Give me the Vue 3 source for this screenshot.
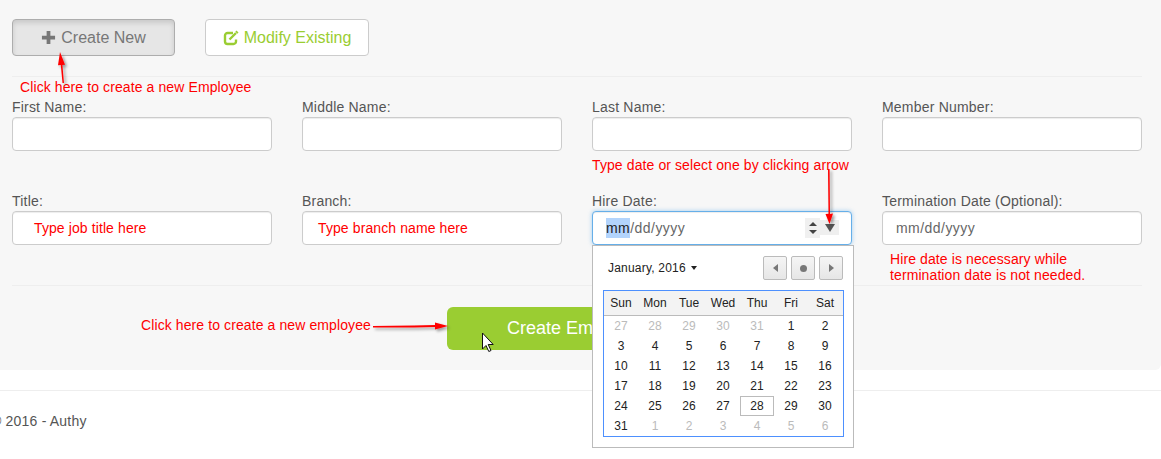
<script setup>
const fields = [
    { label: "First Name:" },
    { label: "Middle Name:" },
    { label: "Last Name:" },
    { label: "Member Number:" },
    { label: "Title:", note: "Type job title here", indent: "wide" },
    { label: "Branch:", note: "Type branch name here" },
    { label: "Hire Date:", date: true, active: true },
    { label: "Termination Date (Optional):", date: true },
];

const weekdays = ["Sun", "Mon", "Tue", "Wed", "Thu", "Fri", "Sat"];

const weeks = [
    [27, 28, 29, 30, 31, 1, 2],
    [3, 4, 5, 6, 7, 8, 9],
    [10, 11, 12, 13, 14, 15, 16],
    [17, 18, 19, 20, 21, 22, 23],
    [24, 25, 26, 27, 28, 29, 30],
    [31, 1, 2, 3, 4, 5, 6],
];

function isMuted(rowIndex, day) {
    return (rowIndex === 0 && day > 20) || (rowIndex === 5 && day < 20);
}
</script>

<template>
    <div class="page">
        <section class="panel">
            <div class="tabs">
                <button class="tab tab-active">
                    <svg class="tab-icon" viewBox="0 0 16 16" width="15" height="15">
                        <path d="M6 1h4v5h5v4h-5v5H6v-5H1V6h5z" fill="#777" />
                    </svg>
                    Create New
                </button>
                <button class="tab tab-modify">
                    <svg class="tab-icon" viewBox="0 0 16 16" width="16" height="16">
                        <path d="M13 9.500v2a2.500 2.500 0 0 1-2.500 2.500h-6A2.500 2.500 0 0 1 2 11.500v-6A2.500 2.500 0 0 1 4.500 3H10" fill="none" stroke="#9acd32" stroke-width="2.400" />
                        <path d="M6.500 9.500L13 3" fill="none" stroke="#9acd32" stroke-width="2.400" />
                        <path d="M13.500 .5l2 2-1.200 1.200-2-2z" fill="#9acd32" />
                    </svg>
                    Modify Existing
                </button>
            </div>

            <hr class="rule" />

            <div class="fields">
                <div v-for="f in fields" :key="f.label" class="field">
                    <label>{{ f.label }}</label>
                    <div class="input" :class="{ focused: f.active }">
                        <span v-if="f.note" class="note" :class="{ wide: f.indent }">{{ f.note }}</span>
                        <span v-if="f.date" class="date-text"><span :class="{ sel: f.active }">mm</span>/dd/yyyy</span>
                        <template v-if="f.active">
                            <span class="spin">
                                <i class="up"></i>
                                <i class="down"></i>
                            </span>
                            <span class="drop"><i></i></span>
                        </template>
                    </div>
                </div>
            </div>

            <hr class="rule rule-low" />

            <div class="submit-row">
                <button class="submit">Create Employee</button>
            </div>
        </section>

        <footer class="footer">
            <p>© 2016 - Authy</p>
        </footer>

        <!-- date picker popup -->
        <div class="picker">
            <div class="picker-head">
                <span class="month">January, 2016 <i class="caret"></i></span>
                <div class="picker-nav">
                    <button><i class="tri-left"></i></button>
                    <button><i class="dot"></i></button>
                    <button><i class="tri-right"></i></button>
                </div>
            </div>
            <div class="cal">
                <div class="cal-head">
                    <span v-for="d in weekdays" :key="d">{{ d }}</span>
                </div>
                <div v-for="(week, i) in weeks" :key="i" class="cal-row">
                    <span
                        v-for="day in week"
                        :key="day"
                        :class="{ muted: isMuted(i, day), today: i === 4 && day === 28 }"
                    >{{ day }}</span>
                </div>
            </div>
        </div>

        <!-- screenshot annotations -->
        <span class="mark m1">Click here to create a new Employee</span>
        <span class="mark m2">Type date or select one by clicking arrow</span>
        <span class="mark m3">Hire date is necessary while<br />termination date is not needed.</span>
        <span class="mark m4">Click here to create a new employee</span>

        <svg class="arrows" width="1161" height="459" viewBox="0 0 1161 459">
            <defs>
                <filter id="arrow-shadow" x="-50%" y="-50%" width="200%" height="200%">
                    <feDropShadow dx="2" dy="2" stdDeviation="1.500" flood-color="#000" flood-opacity="0.4" />
                </filter>
            </defs>
            <g fill="#f00" stroke="none" filter="url(#arrow-shadow)">
                <path d="M64 83L62.400 65 65 64.700 60 52 58 65.200 60.800 65 62.500 83z" />
                <path d="M828 169h1.600l.4 45 3-.4L829.500 224 825.500 214l3-.2z" />
                <path d="M373 326l41 -.5 21-.5v-2.500l13 3.500-13 3.500v-2.500l-21 .5-41 0z" />
            </g>
            <!-- mouse pointer -->
            <path d="M482.500 333v16l3.500-3.500 2.800 6 2.200-1-2.800-6h5z" fill="#fff" stroke="#111" stroke-width="1" />
        </svg>
    </div>
</template>

<style scoped>
.page {
    position: relative;
    width: 1161px;
    height: 459px;
    overflow: hidden;
    font-family: "Liberation Sans", Arial, sans-serif;
    font-size: 14px;
    color: #555;
    background: #fff;
}

.panel {
    height: 370px;
    box-sizing: border-box;
    padding: 19px 19px 0 12px;
    background: #f7f7f7;
    border-radius: 0 0 6px 0;
}

.tabs {
    display: flex;
    gap: 30px;
}

.tab {
    display: flex;
    align-items: center;
    justify-content: center;
    gap: 5px;
    height: 37px;
    box-sizing: border-box;
    border: 1px solid #ccc;
    border-radius: 4px;
    background: #fff;
    font-family: inherit;
    font-size: 16px;
}

.tab-active {
    width: 163px;
    color: #777;
    background: #e6e6e6;
    border-color: #adadad;
    box-shadow: inset 0 3px 5px rgba(0, 0, 0, .125);
}

.tab-modify {
    width: 164px;
    color: #9acd32;
}

.rule {
    margin: 20px 0 0;
    border: 0;
    border-top: 1px solid #eee;
}

.fields {
    display: grid;
    grid-template-columns: repeat(4, 260px);
    column-gap: 30px;
    row-gap: 42px;
    margin-top: 22px;
}

.field label {
    display: block;
    height: 18px;
    line-height: 16px;
    letter-spacing: .2px;
    color: #555;
}

.input {
    position: relative;
    display: flex;
    align-items: center;
    height: 34px;
    box-sizing: border-box;
    padding: 0 13px;
    background: #fff;
    border: 1px solid #ccc;
    border-radius: 4px;
    box-shadow: inset 0 1px 1px rgba(0, 0, 0, .075);
}

.input.focused {
    border-color: #66afe9;
    box-shadow: inset 0 1px 1px rgba(0, 0, 0, .075), 0 0 4px rgba(102, 175, 233, .6);
}

.note {
    color: #f00;
    font-size: 14px;
    letter-spacing: .1px;
    margin-left: 2px;
}

.note.wide {
    margin-left: 8px;
}

.date-text {
    color: #666;
    font-size: 14px;
    letter-spacing: .45px;
    white-space: pre;
}

.sel {
    background: #b3d4fc;
    color: #222;
    padding: 2px 0;
}

.spin {
    position: absolute;
    left: 212px;
    top: 6px;
    width: 15px;
    height: 20px;
    background: #f0f0f0;
}

.spin i,
.drop i {
    position: absolute;
    width: 0;
    height: 0;
    border-left: 4px solid transparent;
    border-right: 4px solid transparent;
}

.spin .up {
    left: 4px;
    top: 4px;
    border-bottom: 4px solid #444;
}

.spin .down {
    left: 4px;
    top: 12px;
    border-top: 4px solid #444;
}

.drop {
    position: absolute;
    left: 227px;
    top: 8px;
    width: 19px;
    height: 15px;
    background: #efefef;
}

.drop i {
    left: 5px;
    top: 4px;
    border-left-width: 5px;
    border-right-width: 5px;
    border-top: 8px solid #555;
}

.rule-low {
    margin-top: 40px;
}

.submit-row {
    margin-top: 21px;
    padding-left: 435px;
}

.submit {
    width: 300px;
    height: 43px;
    padding: 0 0 0 60px;
    border: 0;
    border-radius: 6px;
    background: #9acd32;
    color: #fff;
    font-family: inherit;
    font-size: 18px;
    text-align: left;
}

.footer {
    margin-top: 20px;
    border-top: 1px solid #eee;
}

.footer p {
    margin: 20px 0 0 -9px;
    color: #555;
    line-height: 20px;
    letter-spacing: .2px;
}

.picker {
    position: absolute;
    left: 592px;
    top: 245px;
    width: 262px;
    height: 203px;
    box-sizing: border-box;
    padding: 10px 10px 0;
    background: #fff;
    border: 1px solid #bbb;
}

.picker-head {
    display: flex;
    align-items: center;
    justify-content: space-between;
    height: 24px;
    padding-left: 5px;
    color: #333;
    font-size: 12px;
}

.month {
    display: flex;
    align-items: center;
    gap: 5px;
    color: #222;
    letter-spacing: .2px;
}

.caret {
    width: 0;
    height: 0;
    border-left: 3.500px solid transparent;
    border-right: 3.500px solid transparent;
    border-top: 4px solid #222;
}

.picker-nav {
    display: flex;
    gap: 4px;
}

.picker-nav button {
    display: flex;
    align-items: center;
    justify-content: center;
    width: 24px;
    height: 24px;
    padding: 0;
    background: linear-gradient(#f5f5f5, #e6e6e6);
    border: 1px solid #bbb;
    border-radius: 2px;
}

.tri-left,
.tri-right {
    width: 0;
    height: 0;
    border-top: 4px solid transparent;
    border-bottom: 4px solid transparent;
}

.tri-left {
    border-right: 5px solid #777;
}

.tri-right {
    border-left: 5px solid #777;
}

.dot {
    width: 7px;
    height: 7px;
    border-radius: 50%;
    background: #777;
}

.cal {
    margin-top: 10px;
    width: 241px;
    box-sizing: border-box;
    border: 1px solid #4d90fe;
    color: #222;
    font-size: 12px;
}

.cal-head,
.cal-row {
    display: grid;
    grid-template-columns: repeat(7, 34px);
    text-align: center;
}

.cal-head {
    height: 24px;
    line-height: 24px;
    background: #f3f3f3;
    border-bottom: 1px solid #bbb;
}

.cal-row {
    height: 20px;
    line-height: 20px;
}

.muted {
    color: #bbb;
}

.today {
    box-sizing: border-box;
    border: 1px solid #bbb;
    line-height: 18px;
}

.mark {
    position: absolute;
    color: #f00;
    font-size: 14px;
    letter-spacing: .1px;
    line-height: 16px;
    white-space: nowrap;
}

.m1 {
    left: 20px;
    top: 79px;
}

.m2 {
    left: 592px;
    top: 157px;
}

.m3 {
    left: 890px;
    top: 251px;
}

.m4 {
    left: 141px;
    top: 317px;
}

.arrows {
    position: absolute;
    left: 0;
    top: 0;
    pointer-events: none;
}
</style>
